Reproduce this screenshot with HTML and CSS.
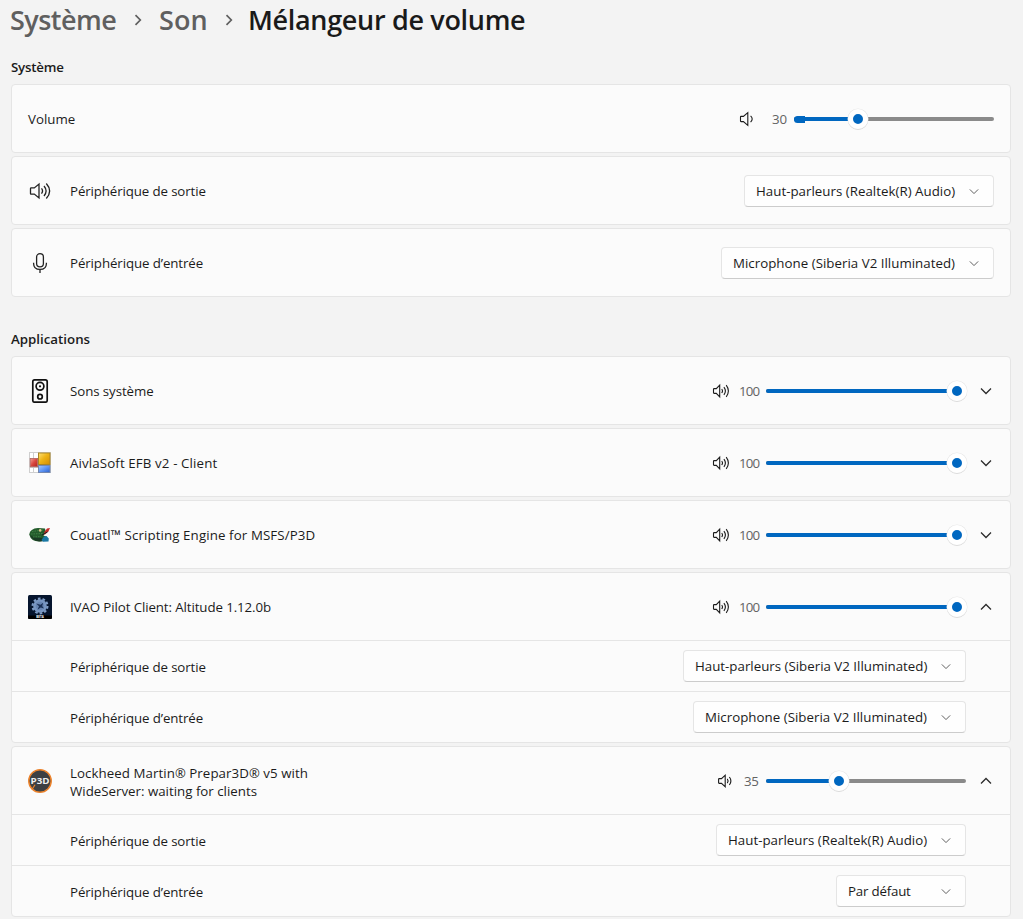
FILE: index.html
```html
<!DOCTYPE html>
<html lang="fr">
<head>
<meta charset="utf-8">
<title>Mélangeur de volume</title>
<link rel="stylesheet" href="styles.css">
</head>
<body>
<svg class="defs" width="0" height="0">
  <symbol id="chev" viewBox="0 0 12 8"><path d="M1 1.5 6 6.5 11 1.5"/></symbol>
  <symbol id="spk1" viewBox="0 0 18 16"><path d="M2 5.4H4.4L8.8 1.7V14.3L4.4 10.6H2Q1.5 10.6 1.5 10V6Q1.5 5.4 2 5.4ZM11.6 4.9Q14.8 8 11.6 11.1"/></symbol>
  <symbol id="spk2" viewBox="0 0 18 16"><path d="M2.2 5.6H4.5L8.2 2.2V13.8L4.5 10.4H2.2Q1.6 10.4 1.6 9.8V6.2Q1.6 5.6 2.2 5.6ZM10.3 5.9Q11.9 8 10.3 10.1M12.4 4Q15.4 8 12.4 12"/></symbol>
  <symbol id="spk3" viewBox="0 0 18 16"><path d="M2.1 5.6H4.3L7.7 2.2V13.8L4.3 10.4H2.1Q1.5 10.4 1.5 9.8V6.2Q1.5 5.6 2.1 5.6ZM9.7 6Q11.3 8 9.7 10M11.9 4.1Q14.9 8 11.9 11.9M14.2 2.2Q18.6 8 14.2 13.8"/></symbol>
</svg>
<main class="page">
  <h1 class="crumbs">
    <span class="crumb c1">Système</span>
    <svg class="sep" viewBox="0 0 8 12"><path d="M1.5 1.2 6.3 6 1.5 10.8"/></svg>
    <span class="crumb c2">Son</span>
    <svg class="sep sep2" viewBox="0 0 8 12"><path d="M1.5 1.2 6.3 6 1.5 10.8"/></svg>
    <span class="crumb current">Mélangeur de volume</span>
  </h1>

  <h2 class="section s1">Système</h2>
  <section class="cards">
    <div class="card"><div class="row">
      <span class="label grow">Volume</span>
      <svg class="spk"><use href="#spk1"/></svg>
      <span class="value wide">30</span>
      <div class="slider"><i class="fill v30"></i><i class="nub"></i><i class="thumb v30"></i></div>
    </div></div>
    <div class="card"><div class="row">
      <svg class="icon stroke" viewBox="0 0 24 24"><path d="M3.2 8.9H6.3L11 5.1V18.9L6.3 15.1H3.2Q2.5 15.1 2.5 14.4V9.6Q2.5 8.9 3.2 8.9ZM13.5 9.4Q15.6 12 13.5 14.6M16 7Q20.2 12 16 17M18.3 4.5Q25 12 18.3 19.5"/></svg>
      <span class="label grow t-out">Périphérique de sortie</span>
      <button class="combo w250"><span class="t-real">Haut-parleurs (Realtek(R) Audio)</span><svg><use href="#chev"/></svg></button>
    </div></div>
    <div class="card"><div class="row">
      <svg class="icon stroke" viewBox="0 0 24 24"><rect x="8.6" y="2.6" width="6.8" height="13.2" rx="3.4"/><path d="M5.6 11.8V12.4Q5.6 18.4 12 18.4T18.4 12.4V11.8M12 18.4V22"/></svg>
      <span class="label grow t-in">Périphérique d’entrée</span>
      <button class="combo w273"><span class="t-mic">Microphone (Siberia V2 Illuminated)</span><svg><use href="#chev"/></svg></button>
    </div></div>
  </section>

  <h2 class="section s2">Applications</h2>
  <section class="cards">
    <div class="card"><div class="row">
      <svg class="icon stroke bold" viewBox="0 0 24 24"><rect x="4.8" y=".9" width="14.4" height="22.3" rx="1.8"/><circle cx="12" cy="7.3" r="3.9"/><circle cx="12" cy="17.7" r="2.3"/><circle class="dot" cx="12" cy="7.3" r="1.1"/></svg>
      <span class="label grow t-sons">Sons système</span>
      <svg class="spk"><use href="#spk3"/></svg><span class="value">100</span>
      <div class="slider"><i class="fill v100"></i><i class="thumb v100"></i></div>
      <svg class="toggle"><use href="#chev"/></svg>
    </div></div>
    <div class="card"><div class="row">
      <svg class="icon" viewBox="0 0 24 24">
        <defs>
          <linearGradient id="gy" x2="1" y2="1"><stop stop-color="#ffe27a"/><stop offset=".45" stop-color="#eeb417"/><stop offset="1" stop-color="#d48c00"/></linearGradient>
          <linearGradient id="gr" x2="1" y2="1"><stop stop-color="#f4a39a"/><stop offset=".5" stop-color="#d84840"/><stop offset="1" stop-color="#b3201c"/></linearGradient>
          <linearGradient id="gb" x2="1" y2="1"><stop stop-color="#a8c8ff"/><stop offset=".5" stop-color="#6096f4"/><stop offset="1" stop-color="#2c5fc8"/></linearGradient>
        </defs>
        <rect x="1.5" y="1.5" width="21" height="20" fill="#fff" stroke="#cfcfcf"/>
        <path d="M5.5 2V21M2 16.5H10" stroke="#cfcfcf" fill="none"/>
        <rect x="10.5" y="2" width="11.5" height="11.5" fill="url(#gy)" stroke="#a98526"/>
        <rect x="2.2" y="7.4" width="7.4" height="8.4" fill="url(#gr)" stroke="#b06460" stroke-width=".8"/>
        <rect x="10.5" y="14.5" width="11.5" height="7" fill="url(#gb)" stroke="#7487ad"/>
      </svg>
      <span class="label grow t-aivla">AivlaSoft EFB v2 - Client</span>
      <svg class="spk"><use href="#spk3"/></svg><span class="value">100</span>
      <div class="slider"><i class="fill v100"></i><i class="thumb v100"></i></div>
      <svg class="toggle"><use href="#chev"/></svg>
    </div></div>
    <div class="card"><div class="row">
      <svg class="icon" viewBox="0 0 24 24">
        <path d="M1.2 11.5Q2 5.5 10 5L17 5.6 17.8 9 15.5 12.5 19 14 18 17.5 11 18.5Q3 18.5 1.2 11.5Z" fill="#245c2c"/>
        <path d="M2 12Q6 15.5 14 15L17 17.8Q6 20.5 2 12Z" fill="#1a3b24"/>
        <path d="M4 8.5 15 7M3 11 15 10.5M5 14 13 13.5" stroke="#3f8146" stroke-dasharray="1.5 1" fill="none"/>
        <circle cx="12.2" cy="7.4" r="1.3" fill="#d6c88a"/>
        <path d="M16 9.5 19 5.6 22 5 20.5 8.2 16.5 12Z" fill="#c42a28"/>
        <path d="M14 12 19.5 9" stroke="#202020" stroke-width="1"/>
        <path d="M13.5 17 16 13.5 18.5 13 20.8 15.6 20.5 18.5 15 18.7Z" fill="#1978a4"/>
      </svg>
      <span class="label grow t-couatl">Couatl™ Scripting Engine for MSFS/P3D</span>
      <svg class="spk"><use href="#spk3"/></svg><span class="value">100</span>
      <div class="slider"><i class="fill v100"></i><i class="thumb v100"></i></div>
      <svg class="toggle"><use href="#chev"/></svg>
    </div></div>
    <div class="card">
      <div class="row">
        <svg class="icon" viewBox="0 0 24 24">
          <rect width="24" height="24" rx="1.5" fill="#06152e"/><path d="M0 20.5H24V22.5Q24 24 22.5 24H1.5Q0 24 0 22.5Z" fill="#000"/>
          <circle cx="12" cy="11" r="7.4" fill="none" stroke="#7f9cc6" stroke-width="2.2" stroke-dasharray="2.6 2.05"/>
          <circle cx="12" cy="11" r="6.8" fill="#7896c2"/><circle cx="12" cy="11" r="4.3" fill="#6785b3"/>
          <path d="M8.2 8.5 12.5 9.8 15.2 7.7 14.2 11 16 13.5 12.7 12.5 9.5 14.8 11 11.3Z" fill="#1b3157"/>
          <text class="beta" x="12" y="23.4" text-anchor="middle">BETA</text>
        </svg>
        <span class="label grow t-ivao">IVAO Pilot Client: Altitude 1.12.0b</span>
        <svg class="spk"><use href="#spk3"/></svg><span class="value">100</span>
        <div class="slider"><i class="fill v100"></i><i class="thumb v100"></i></div>
        <svg class="toggle up"><use href="#chev"/></svg>
      </div>
      <div class="row sub"><span class="label grow t-out">Périphérique de sortie</span><button class="combo w283"><span>Haut-parleurs (Siberia V2 Illuminated)</span><svg><use href="#chev"/></svg></button></div>
      <div class="row sub"><span class="label grow t-in">Périphérique d’entrée</span><button class="combo w273"><span class="t-mic">Microphone (Siberia V2 Illuminated)</span><svg><use href="#chev"/></svg></button></div>
    </div>
    <div class="card">
      <div class="row">
        <svg class="icon" viewBox="0 0 24 24">
          <circle cx="12" cy="12" r="11.2" fill="#3d4043" stroke="#ec832c" stroke-width="1.5"/>
          <path d="M4 20.5 7 15.8" stroke="#ec832c" stroke-width="1.2"/>
          <text class="p3d" x="2.6" y="15" textLength="19" lengthAdjust="spacingAndGlyphs">P3D</text>
        </svg>
        <span class="label grow two"><span class="t-lm1">Lockheed Martin<span class="reg">®</span> Prepar3D<span class="reg">®</span> v5 with</span><br><span>WideServer: waiting for clients</span></span>
        <svg class="spk"><use href="#spk2"/></svg><span class="value short">35</span>
        <div class="slider"><i class="fill v35"></i><i class="thumb v35"></i></div>
        <svg class="toggle up"><use href="#chev"/></svg>
      </div>
      <div class="row sub"><span class="label grow t-out">Périphérique de sortie</span><button class="combo w250"><span class="t-real">Haut-parleurs (Realtek(R) Audio)</span><svg><use href="#chev"/></svg></button></div>
      <div class="row sub"><span class="label grow t-in">Périphérique d’entrée</span><button class="combo w130"><span class="t-par">Par défaut</span><svg><use href="#chev"/></svg></button></div>
    </div>
  </section>
</main>
</body>
</html>
```
FILE: styles.css
```css
* { box-sizing: border-box; }
body {
  margin: 0;
  height: 919px;
  overflow: hidden;
  background: #f3f3f3;
  color: #1b1b1b;
  font: 13.3px/18px "Open Sans", "Noto Sans", sans-serif;
}
.defs { display: block; height: 0; }
.page { padding: 0 12px 0 11px; }
svg { fill: none; stroke: none; flex: none; }

.crumbs { display: flex; align-items: center; height: 40px; margin: 0 0 0 -1px; font-size: 27px; font-weight: 600; line-height: 40px; white-space: nowrap; }
.crumb { color: #5f5f5f; }
.c1 { width: 106px; letter-spacing: -.55px; }
.c2 { width: 49px; letter-spacing: .1px; }
.current { color: #1a1a1a; letter-spacing: -.32px; }
.sep { width: 8px; height: 12px; margin: 0 17px 0 18px; stroke: #5f5f5f; stroke-width: 1.7; }
.sep2 { margin: 0 15px 0 17px; }

.section { margin: 0; font-size: 13.3px; font-weight: 600; line-height: 20px; }
.s1 { padding: 17px 0 7px; letter-spacing: -.2px; }
.s2 { padding: 32px 0 7px; }
.cards { display: flex; flex-direction: column; gap: 3px; }
.card { background: #fbfbfb; border: 1px solid #e5e5e5; border-radius: 4px; }
.row { display: flex; align-items: center; height: 67px; padding: 0 16px; }
.sub { height: 51px; padding: 0 44px 0 58px; border-top: 1px solid #e5e5e5; }
.sub .label { padding-top: 2px; }
.icon { width: 24px; height: 24px; margin-right: 18px; }
.stroke { stroke: #222; stroke-width: 1.3; }
.bold { stroke-width: 1.7; stroke: #111; }
.dot { fill: #111; stroke: none; }
.grow { flex: 1; white-space: nowrap; }
.two { padding-top: 2px; }

/* Tracking per label */
.t-out { letter-spacing: -.12px; }
.t-in { letter-spacing: -.1px; }
.t-real, .t-mic { letter-spacing: .02px; }
.t-par { letter-spacing: -.2px; }
.t-sons { letter-spacing: -.08px; }
.t-aivla { letter-spacing: .12px; }
.t-couatl { letter-spacing: .11px; }
.t-ivao { letter-spacing: -.1px; }
.t-lm1 { letter-spacing: .06px; }

.combo { display: flex; align-items: center; justify-content: space-between; height: 32px; padding: 0 14px 0 11px; border: 1px solid #e5e5e5; border-bottom-color: #cccccc; border-radius: 4px; background: #fefefe; color: inherit; font: inherit; white-space: nowrap; }
.combo svg { width: 10px; height: 7px; margin-top: 1px; stroke: #606060; stroke-width: 1.2; }
.w250 { width: 250px; }
.w273 { width: 273px; }
.w283 { width: 283px; }
.w130 { width: 130px; }

.spk { width: 18px; height: 16px; stroke: #1b1b1b; stroke-width: 1.1; }
.value { width: 30px; padding-left: 9px; margin-right: 6px; color: #636363; letter-spacing: -.9px; }
.short { width: 25px; letter-spacing: -.3px; }
.wide { width: 37px; margin-right: 0; padding-left: 15px; letter-spacing: -.1px; }
.slider { position: relative; width: 200px; height: 4px; border-radius: 2px; background: #8a8a8a; }
.fill { position: absolute; left: 0; top: 0; height: 4px; border-radius: 2px; background: #0067c0; }
.fill.v30 { width: 64px; }
.fill.v35 { width: 73px; }
.fill.v100 { width: 200px; }
.nub { position: absolute; left: 0; top: -1px; width: 11px; height: 7px; border-radius: 4px 0 0 4px; background: #0067c0; }
.thumb { position: absolute; top: -8px; width: 20px; height: 20px; border: 5px solid #fff; border-radius: 50%; background: #0067c0; box-shadow: 0 0 0 .5px #e6e6e6, 0 1px 0 0 #d4d4d4; }
.thumb.v30 { left: 54px; }
.thumb.v35 { left: 63px; }
.thumb.v100 { left: 181px; }
.toggle { width: 12px; height: 8px; margin-left: 14px; margin-right: 2px; stroke: #2a2a2a; stroke-width: 1.25; }
.up { transform: scaleY(-1); }
.reg { font-size: 13px; }
.beta { font: 700 3px "Open Sans", sans-serif; fill: #fff; }
.p3d { font: 700 8px "Open Sans", sans-serif; fill: #eee; }
```
